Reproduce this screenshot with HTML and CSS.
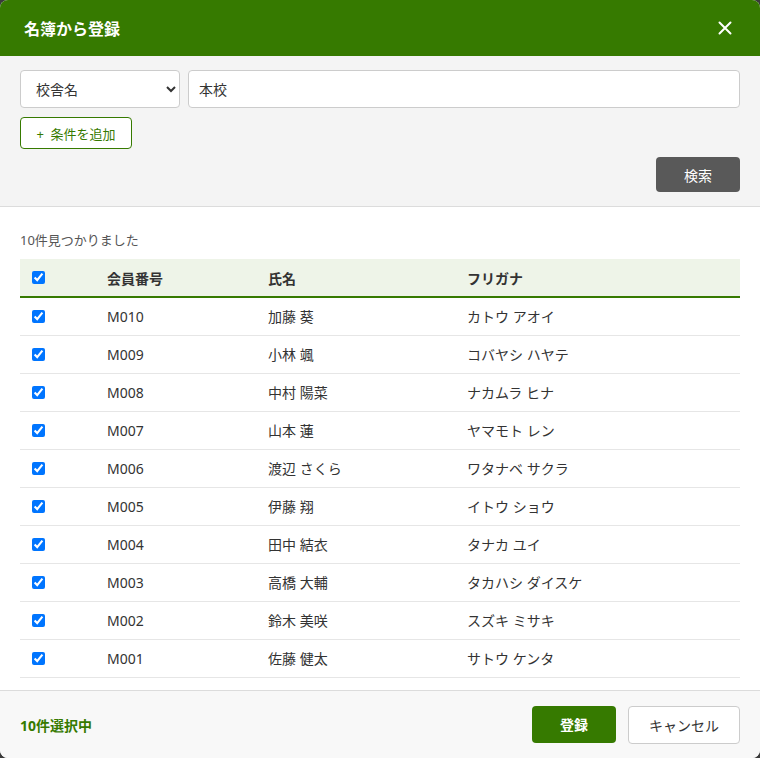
FILE: index.html
```html
<!DOCTYPE html>
<html lang="ja">
<head>
<meta charset="utf-8">
<meta name="viewport" content="width=device-width, initial-scale=1.0">
<title>名簿から登録</title>
<link rel="stylesheet" href="styles.css">
</head>
<body>
    <div class="dialog">
        <div class="dialog-header">
            <h2>名簿から登録</h2>
            <button type="button" class="close-button" aria-label="閉じる">
                <svg width="14" height="14" viewBox="0 0 14 14"><path d="M1.5 1.5 L12.5 12.5 M12.5 1.5 L1.5 12.5" stroke="#fff" stroke-width="2" stroke-linecap="round"/></svg>
            </button>
        </div>

        <div class="search-area">
            <div class="condition-row">
                <select class="field-select">
                    <option>校舎名</option>
                    <option>氏名</option>
                    <option>会員番号</option>
                </select>
                <input type="text" class="field-input" value="本校">
            </div>
            <button type="button" class="add-button">+&nbsp; 条件を追加</button>
            <div class="search-actions">
                <button type="button" class="search-button">検索</button>
            </div>
        </div>

        <div class="results">
            <div class="result-count">10件見つかりました</div>
            <table class="member-table">
                <colgroup>
                    <col style="width: 75px">
                    <col style="width: 161px">
                    <col style="width: 199px">
                    <col>
                </colgroup>
                <thead>
                    <tr>
                        <th><input type="checkbox" class="check-all" checked></th>
                        <th>会員番号</th>
                        <th>氏名</th>
                        <th>フリガナ</th>
                    </tr>
                </thead>
                <tbody id="memberRows"></tbody>
            </table>
        </div>

        <div class="dialog-footer">
            <div class="selected-count">10件選択中</div>
            <div class="footer-buttons">
                <button type="button" class="primary-button">登録</button>
                <button type="button" class="cancel-button">キャンセル</button>
            </div>
        </div>
    </div>

    <script>
        const members = [
            ['M010', '加藤 葵', 'カトウ アオイ'],
            ['M009', '小林 颯', 'コバヤシ ハヤテ'],
            ['M008', '中村 陽菜', 'ナカムラ ヒナ'],
            ['M007', '山本 蓮', 'ヤマモト レン'],
            ['M006', '渡辺 さくら', 'ワタナベ サクラ'],
            ['M005', '伊藤 翔', 'イトウ ショウ'],
            ['M004', '田中 結衣', 'タナカ ユイ'],
            ['M003', '高橋 大輔', 'タカハシ ダイスケ'],
            ['M002', '鈴木 美咲', 'スズキ ミサキ'],
            ['M001', '佐藤 健太', 'サトウ ケンタ']
        ];

        const tbody = document.getElementById('memberRows');
        members.forEach(m => {
            const tr = document.createElement('tr');
            const checkCell = document.createElement('td');
            const box = document.createElement('input');
            box.type = 'checkbox';
            box.checked = true;
            checkCell.appendChild(box);
            tr.appendChild(checkCell);
            m.forEach(value => {
                const td = document.createElement('td');
                td.textContent = value;
                tr.appendChild(td);
            });
            tbody.appendChild(tr);
        });
    </script>
</body>
</html>
```

FILE: styles.css
```css
:root {
    --green: #367a00;
    --text-color: #333;
    --line: #e6e6e6;
}

* {
    box-sizing: border-box;
}

body {
    margin: 0;
    background-color: #3b3b3b;
    font-family: "Noto Sans", "Noto Sans CJK JP", sans-serif;
    color: var(--text-color);
}

.dialog {
    width: 760px;
    height: 758px;
    background-color: #fff;
    border-radius: 8px;
    overflow: hidden;
    display: flex;
    flex-direction: column;
}

.dialog-header {
    height: 56px;
    background-color: var(--green);
    display: flex;
    align-items: center;
    justify-content: space-between;
    padding: 0 27px 0 24px;
}

.dialog-header h2 {
    margin: 0;
    color: #fff;
    font-size: 16px;
    font-weight: 700;
}

.close-button {
    background: none;
    border: none;
    padding: 0;
    width: 16px;
    height: 16px;
    display: flex;
    align-items: center;
    justify-content: center;
    cursor: pointer;
}

.search-area {
    background-color: #f4f4f4;
    border-bottom: 1px solid #dcdcdc;
    padding: 14px 20px 14px;
}

.condition-row {
    display: flex;
    gap: 8px;
}

.field-select {
    width: 160px;
    height: 38px;
    padding: 0 8px 0 11px;
    font-family: inherit;
    font-size: 14px;
    color: var(--text-color);
    background-color: #fff;
    border: 1px solid #ccc;
    border-radius: 4px;
}

.field-input {
    flex: 1;
    height: 38px;
    padding: 0 10px;
    font-family: inherit;
    font-size: 14px;
    color: var(--text-color);
    background-color: #fff;
    border: 1px solid #ccc;
    border-radius: 4px;
}

.add-button {
    margin-top: 9px;
    width: 112px;
    height: 32px;
    padding: 0;
    font-family: inherit;
    font-size: 13px;
    color: var(--green);
    background-color: #fff;
    border: 1px solid var(--green);
    border-radius: 4px;
    cursor: pointer;
}

.search-actions {
    display: flex;
    justify-content: flex-end;
    margin-top: 8px;
}

.search-button {
    width: 84px;
    height: 35px;
    font-family: inherit;
    font-size: 14px;
    color: #fff;
    background-color: #595959;
    border: none;
    border-radius: 4px;
    cursor: pointer;
}

.results {
    flex: 1;
    padding: 24px 20px 0;
}

.result-count {
    font-size: 13px;
    line-height: 18px;
    color: #555;
    margin-bottom: 10px;
}

.member-table {
    width: 100%;
    border-collapse: collapse;
    table-layout: fixed;
    font-size: 14px;
}

.member-table th {
    height: 38px;
    text-align: left;
    font-weight: 700;
    background-color: #eef4e8;
    border-bottom: 2px solid var(--green);
    padding: 0 12px;
}

.member-table td {
    height: 38px;
    padding: 0 12px;
    border-bottom: 1px solid var(--line);
}

.member-table input[type="checkbox"] {
    display: block;
    margin: 0;
    width: 13px;
    height: 13px;
    accent-color: #0075ff;
}

.member-table .check-all {
    accent-color: #1560c9;
}

.dialog-footer {
    height: 68px;
    background-color: #f8f8f8;
    border-top: 1px solid #dcdcdc;
    display: flex;
    align-items: center;
    justify-content: space-between;
    padding: 0 20px;
}

.selected-count {
    color: var(--green);
    font-size: 14px;
    font-weight: 700;
}

.footer-buttons {
    display: flex;
    gap: 12px;
}

.primary-button {
    width: 84px;
    height: 37px;
    font-family: inherit;
    font-size: 14px;
    font-weight: 700;
    color: #fff;
    background-color: var(--green);
    border: none;
    border-radius: 4px;
    cursor: pointer;
}

.cancel-button {
    width: 112px;
    height: 38px;
    font-family: inherit;
    font-size: 14px;
    color: var(--text-color);
    background-color: #fff;
    border: 1px solid #ccc;
    border-radius: 4px;
    cursor: pointer;
}
```
